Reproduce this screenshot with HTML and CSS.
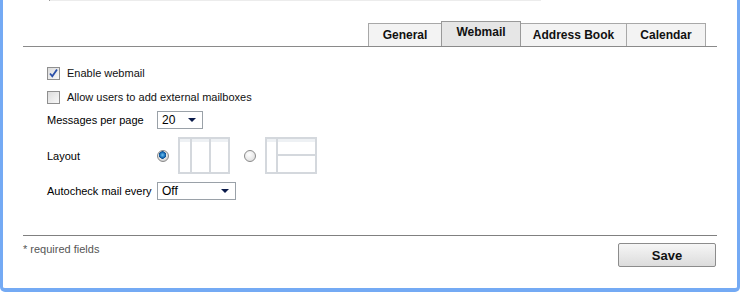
FILE: index.html
```html
<!DOCTYPE html>
<html>
<head>
<meta charset="utf-8">
<link rel="stylesheet" href="styles.css">
</head>
<body>
<div class="frame">
  <div class="topline"></div>
  <div class="tabbar">
    <div class="tab">General</div>
    <div class="tab active">Webmail</div>
    <div class="tab">Address Book</div>
    <div class="tab">Calendar</div>
  </div>
  <div class="form">
    <div class="row check-row">
      <span class="cb checked"><svg width="11" height="11" viewBox="0 0 11 11"><path d="M2 5.5 L4.3 8.3 L9 1.5" fill="none" stroke="#2a4fa8" stroke-width="1.8"/></svg></span>
      <span class="txt">Enable webmail</span>
    </div>
    <div class="row check-row">
      <span class="cb"></span>
      <span class="txt">Allow users to add external mailboxes</span>
    </div>
    <div class="row field r3">
      <span class="lbl">Messages per page</span>
      <span class="sel sel-small"><span>20</span><i class="arrow"></i></span>
    </div>
    <div class="row field r4">
      <span class="lbl">Layout</span>
      <span class="radio on"></span>
      <svg class="lay" width="52" height="37" viewBox="0 0 52 37">
        <rect x="1" y="1" width="50" height="35" fill="#fff" stroke="#d4d8dd" stroke-width="2"/>
        <rect x="2" y="2" width="48" height="3" fill="#eef1f4"/>
        <line x1="13" y1="1" x2="13" y2="36" stroke="#d4d8dd" stroke-width="2"/>
        <line x1="32" y1="1" x2="32" y2="36" stroke="#d4d8dd" stroke-width="2"/>
      </svg>
      <span class="radio"></span>
      <svg class="lay" width="52" height="37" viewBox="0 0 52 37">
        <rect x="1" y="1" width="50" height="35" fill="#fff" stroke="#d4d8dd" stroke-width="2"/>
        <rect x="2" y="2" width="48" height="3" fill="#eef1f4"/>
        <line x1="12" y1="1" x2="12" y2="36" stroke="#d4d8dd" stroke-width="2"/>
        <line x1="12" y1="18" x2="51" y2="18" stroke="#d4d8dd" stroke-width="2"/>
      </svg>
    </div>
    <div class="row field r5">
      <span class="lbl">Autocheck mail every</span>
      <span class="sel sel-wide"><span>Off</span><i class="arrow"></i></span>
    </div>
  </div>
  <div class="footer">
    <span class="req">* required fields</span>
    <button class="save">Save</button>
  </div>
</div>
</body>
</html>
```
FILE: styles.css
```css
html, body {
  margin: 0;
  padding: 0;
  background: #fff;
}
body {
  font-family: "Liberation Sans", Arial, sans-serif;
  font-size: 11px;
  color: #000;
}
.frame {
  width: 740px;
  height: 292px;
  box-sizing: border-box;
  border-left: 3px solid #74aaf4;
  border-right: 3px solid #74aaf4;
  border-bottom: 4px solid #74aaf4;
  border-radius: 0 0 5px 5px;
  padding: 0 20px;
  position: relative;
}
.topline {
  margin-left: 26px;
  width: 491px;
  height: 1px;
  background: #ececec;
  border-left: 1px solid #999;
}
.tabbar {
  margin-top: 20px;
  height: 25px;
  border-bottom: 1px solid #8a8a8a;
  display: flex;
  justify-content: flex-end;
  align-items: flex-end;
  padding-right: 11px;
}
.tab {
  box-sizing: border-box;
  height: 23px;
  padding-top: 4px;
  border: 1px solid #a8a8a8;
  border-bottom: none;
  margin-left: -1px;
  background: #f3f3f3;
  font-weight: bold;
  font-size: 12px;
  text-align: center;
  color: #111;
}
.tab:nth-child(1) { width: 74px; }
.tab:nth-child(2) { width: 80px; }
.tab:nth-child(3) { width: 107px; }
.tab:nth-child(4) { width: 80px; }
.tab.active {
  height: 25px;
  padding-top: 3px;
  background: #e6e6e6;
  border-color: #999;
  position: relative;
  z-index: 1;
}
.form {
  padding-top: 14px;
  padding-left: 24px;
}
.row {
  display: flex;
  align-items: center;
}
.check-row {
  height: 24px;
}
.cb {
  box-sizing: border-box;
  width: 13px;
  height: 13px;
  border: 1px solid #8f8f8f;
  background: linear-gradient(135deg, #dcdcdc, #f8f8f8);
  display: inline-flex;
  align-items: center;
  justify-content: center;
  margin-right: 7px;
}
.cb svg { display: block; }
.txt { color: #111; }
.lbl {
  width: 110px;
  flex: none;
}
.r3 { height: 21px; }
.r4 { height: 37px; margin-top: 7px; }
.r5 { height: 18px; margin-top: 8px; }
.sel {
  box-sizing: border-box;
  height: 18px;
  border: 1px solid #9aa1a8;
  background: #fff;
  display: inline-flex;
  align-items: center;
  justify-content: space-between;
  padding: 0 6px 0 4px;
  font-size: 12px;
}
.sel-small { width: 46px; }
.sel-wide { width: 79px; }
.arrow {
  width: 0;
  height: 0;
  border-left: 4px solid transparent;
  border-right: 4px solid transparent;
  border-top: 4px solid #0a1a4a;
}
.radio {
  box-sizing: border-box;
  width: 12px;
  height: 12px;
  border-radius: 50%;
  border: 1px solid #8a8a8a;
  background: radial-gradient(circle at 40% 35%, #fff, #d8d8d8);
  margin-right: 9px;
  flex: none;
}
.radio.on {
  background: radial-gradient(circle at 45% 40%, #6ec2f0 0, #1a6fb8 2.5px, #0e4f8f 3.5px, #e8e8e8 4px, #cfcfcf 6px);
}
.lay { display: block; margin-right: 14px; }
.footer {
  margin-top: 35px;
  border-top: 1px solid #808080;
  display: flex;
  justify-content: space-between;
  align-items: flex-start;
}
.req {
  margin-top: 7px;
  color: #555;
  font-size: 11px;
}
.save {
  margin-top: 7px;
  margin-right: 1px;
  width: 98px;
  height: 24px;
  border: 1px solid #8c8c8c;
  border-radius: 2px;
  background: linear-gradient(#f6f6f6, #dcdcdc);
  font-family: "Liberation Sans", Arial, sans-serif;
  font-weight: bold;
  font-size: 13px;
  color: #111;
  padding: 0;
}
```
